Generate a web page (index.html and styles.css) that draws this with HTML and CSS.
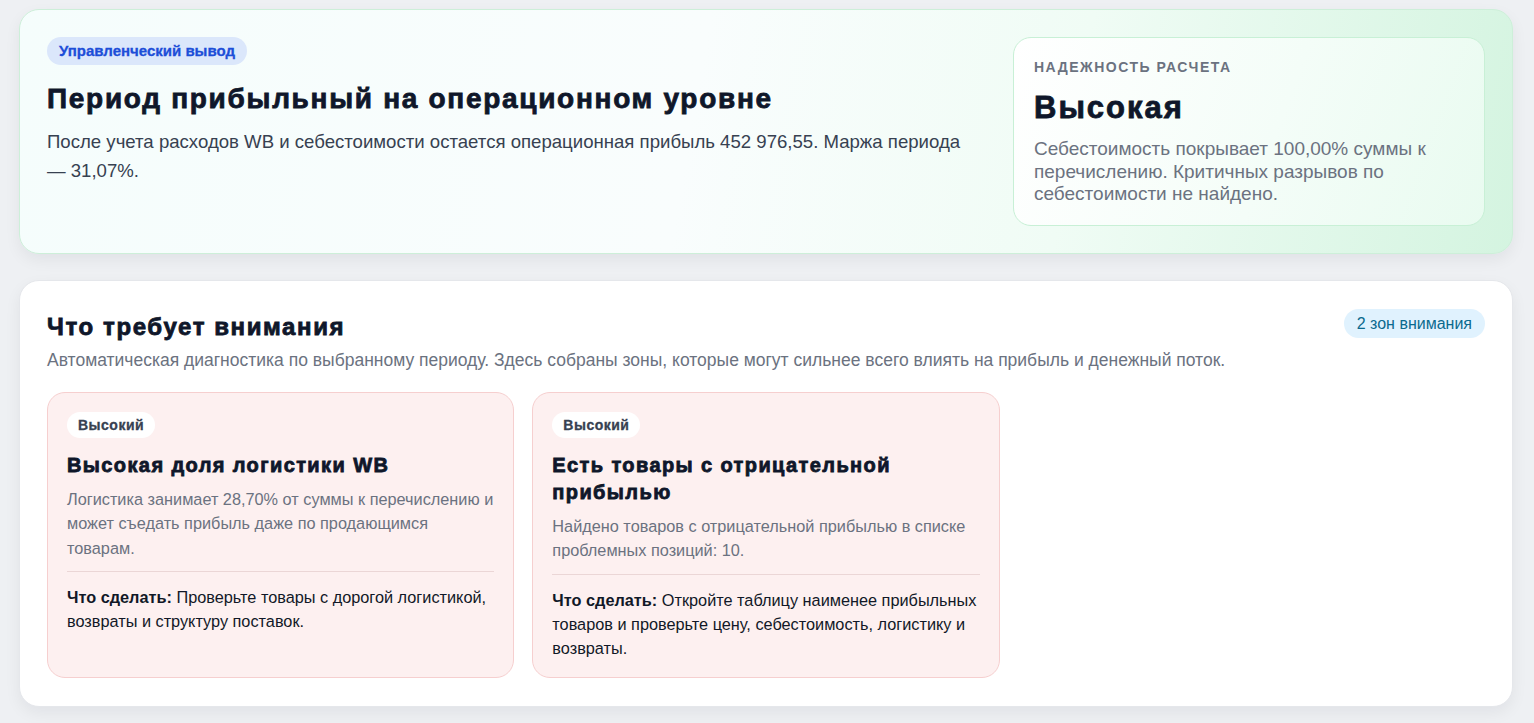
FILE: index.html
```html
<!DOCTYPE html>
<html lang="ru">
<head>
  <meta charset="UTF-8" />
  <title>Отчет по периоду</title>
  <link rel="stylesheet" href="styles.css">
</head>
<body>
  <div class="page">
    <section class="summary">
      <div class="summary-main">
        <span class="tag tag-blue">Управленческий вывод</span>
        <h1 class="summary-title">Период прибыльный на операционном уровне</h1>
        <p class="summary-text">После учета расходов WB и себестоимости остается операционная прибыль 452 976,55. Маржа периода — 31,07%.</p>
      </div>
      <div class="trust">
        <div class="trust-label">Надежность расчета</div>
        <div class="trust-value">Высокая</div>
        <p class="trust-text">Себестоимость покрывает 100,00% суммы к перечислению. Критичных разрывов по себестоимости не найдено.</p>
      </div>
    </section>

    <section class="attention">
      <div class="attention-head">
        <h2 class="attention-title">Что требует внимания</h2>
        <span class="tag tag-sky">2 зон внимания</span>
      </div>
      <p class="attention-sub">Автоматическая диагностика по выбранному периоду. Здесь собраны зоны, которые могут сильнее всего влиять на прибыль и денежный поток.</p>

      <div class="issues">
        <div class="issue">
          <span class="tag tag-white">Высокий</span>
          <h3 class="issue-title">Высокая доля логистики WB</h3>
          <p class="issue-text">Логистика занимает 28,70% от суммы к перечислению и может съедать прибыль даже по продающимся товарам.</p>
          <div class="issue-action"><b>Что сделать:</b> Проверьте товары с дорогой логистикой, возвраты и структуру поставок.</div>
        </div>
        <div class="issue">
          <span class="tag tag-white">Высокий</span>
          <h3 class="issue-title">Есть товары с отрицательной прибылью</h3>
          <p class="issue-text">Найдено товаров с отрицательной прибылью в списке проблемных позиций: 10.</p>
          <div class="issue-action"><b>Что сделать:</b> Откройте таблицу наименее прибыльных товаров и проверьте цену, себестоимость, логистику и возвраты.</div>
        </div>
      </div>
    </section>
  </div>
</body>
</html>
```

FILE: styles.css
```css
body {
  margin: 0;
  background: #eef0f3;
  color: #111827;
  font-family: "Liberation Sans", Arial, sans-serif;
}
.page {
  display: flex;
  flex-direction: column;
  gap: 26px;
  padding: 9px 21px 16px 19px;
}
.tag {
  display: inline-block;
  border-radius: 999px;
  padding: 0 12px;
  line-height: 28px;
  font-size: 15px;
}
.tag-blue {
  background: #dbe7fb;
  color: #1d4ed8;
  font-weight: bold;
  -webkit-text-stroke: 0.3px currentColor;
}
.tag-sky {
  background: #e0f2fe;
  color: #0b6a8e;
  font-size: 16px;
  line-height: 29px;
  padding: 0 13px;
}
.tag-white {
  background: #fff;
  color: #374151;
  font-size: 14px;
  font-weight: bold;
  letter-spacing: 0.5px;
  line-height: 26px;
  padding: 0 11px;
  -webkit-text-stroke: 0.3px currentColor;
}

/* заголовки жирнее обычного bold */
.summary-title,
.trust-value,
.attention-title,
.issue-title {
  font-weight: bold;
  color: #0f172a;
  -webkit-text-stroke: 0.8px currentColor;
}

/* верхний блок с выводом */
.summary {
  display: flex;
  gap: 46px;
  padding: 27px;
  border: 1px solid #cdefd9;
  border-radius: 20px;
  background: linear-gradient(100deg, #f5fdfc 0%, #f9fdfd 45%, #f0fcf5 70%, #d4f4e0 100%);
  box-shadow: 0 6px 16px rgba(15, 23, 42, 0.06);
}
.summary-main {
  flex: 1;
}
.summary-title {
  margin: 17px 0 11px;
  font-size: 28px;
  line-height: 34px;
  letter-spacing: 1.7px;
}
.summary-text {
  margin: 0;
  font-size: 18.6px;
  line-height: 29px;
  color: #374151;
}
.trust {
  width: 430px;
  flex-shrink: 0;
  padding: 21px 20px 19px;
  border: 1px solid #c8f0d6;
  border-radius: 18px;
  background: linear-gradient(110deg, #ffffff 0%, #f4fdf8 55%, #e9fbf0 100%);
}
.trust-label {
  font-size: 14px;
  font-weight: bold;
  letter-spacing: 1.5px;
  line-height: 16px;
  text-transform: uppercase;
  color: #6b7280;
}
.trust-value {
  margin: 15px 0 12px;
  font-size: 31px;
  line-height: 36px;
  letter-spacing: 2px;
}
.trust-text {
  margin: 0;
  font-size: 19px;
  line-height: 22.5px;
  color: #6b7280;
}

/* зоны внимания */
.attention {
  padding: 28px 27px;
  background: #fff;
  border: 1px solid #e5e7eb;
  border-radius: 20px;
  box-shadow: 0 6px 16px rgba(15, 23, 42, 0.06);
}
.attention-head {
  display: flex;
  justify-content: space-between;
  align-items: flex-start;
}
.attention-title {
  margin: 3px 0 0;
  font-size: 24px;
  line-height: 30px;
  letter-spacing: 1.6px;
}
.attention-sub {
  margin: 8px 0 22px;
  font-size: 17.5px;
  line-height: 20px;
  color: #6b7280;
}
.issues {
  display: grid;
  grid-template-columns: repeat(3, 1fr);
  gap: 18px;
}
.issue {
  padding: 19px 19px 17px;
  background: #fdf0f0;
  border: 1px solid #f6cfcf;
  border-radius: 18px;
}
.issue-title {
  margin: 14px 0 8px;
  font-size: 20px;
  line-height: 27px;
  letter-spacing: 1.4px;
}
.issue-text {
  margin: 0 0 13px;
  padding-bottom: 11px;
  border-bottom: 1px solid #ebd6d6;
  font-size: 16.3px;
  line-height: 24.5px;
  color: #6b7280;
}
.issue-action {
  font-size: 16.3px;
  line-height: 24px;
  color: #111827;
}
```
